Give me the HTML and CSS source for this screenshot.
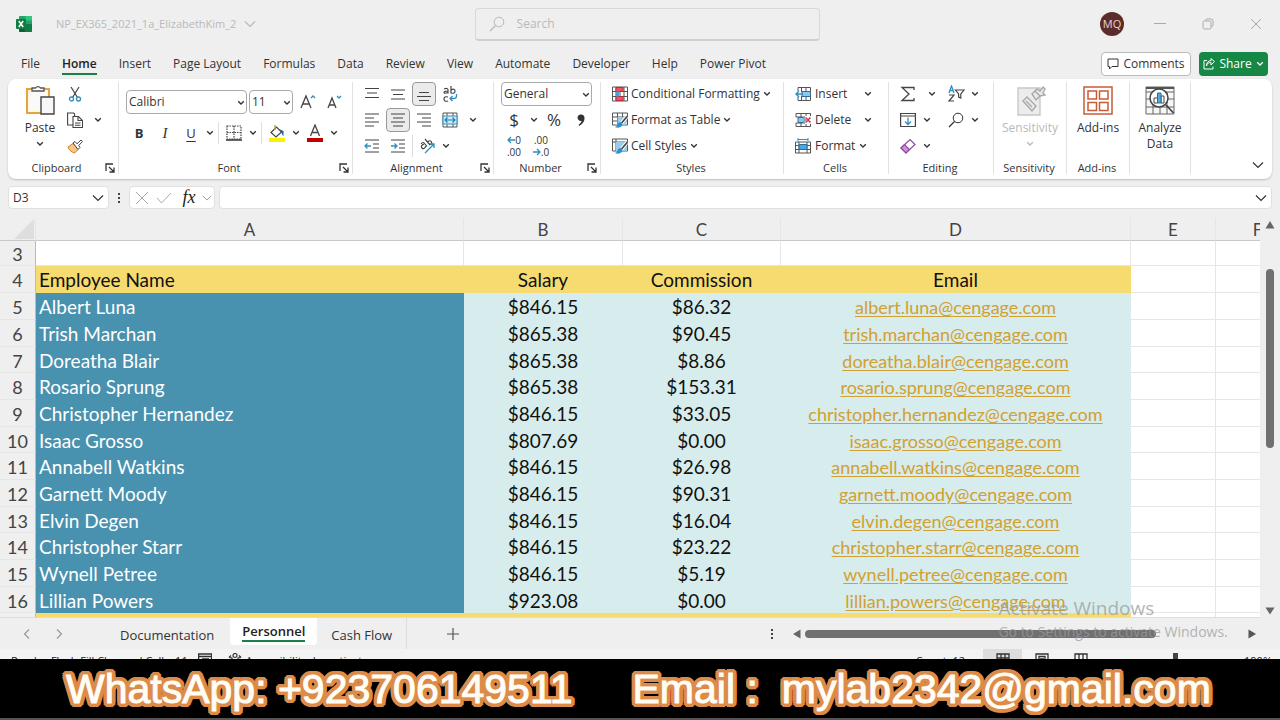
FILE: index.html
```html
<!DOCTYPE html>
<html lang="en">
<head>
<meta charset="utf-8">
<title>NP_EX365_2021_1a_ElizabethKim_2 - Excel</title>
<link rel="stylesheet" href="styles.css">
</head>
<body>
<svg class="defs" aria-hidden="true">
  <symbol id="chev" viewBox="0 0 8 6"><path d="M1.2 1.2 4 4l2.800-2.800" fill="none" stroke="currentColor" stroke-width="1.300"/></symbol>
  <symbol id="chev-lg" viewBox="0 0 12 8"><path d="M1 1.500 6 6.500l5-5" fill="none" stroke="currentColor" stroke-width="1.200"/></symbol>
  <symbol id="launch" viewBox="0 0 10 10"><path d="M1 8V1h7M4 4l4.500 4.500M9 4.500V9H4.500" fill="none" stroke="#333" stroke-width="1.300"/></symbol>
  <symbol id="lens" viewBox="0 0 16 16"><circle cx="10" cy="6" r="4.800" fill="none" stroke="currentColor"/><path d="M6.500 9.500 1 15" stroke="currentColor" stroke-width="1.200"/></symbol>
</svg>

<header class="titlebar">
  <svg class="logo" viewBox="0 0 18 18"><rect x="4" y="1" width="13" height="16" rx="1" fill="#21a366"/><path d="M10.500 1H16a1 1 0 0 1 1 1v3.500h-6.500z" fill="#33c481"/><path d="M4 9h6.500v8H5a1 1 0 0 1-1-1z" fill="#185c37"/><path d="M10.500 9H17v7a1 1 0 0 1-1 1h-5.500z" fill="#107c41"/><rect x="1" y="4" width="10" height="10" rx="1" fill="#107c41"/><path d="m3.800 6 4.400 6M8.200 6l-4.400 6" stroke="#fff" stroke-width="1.500"/></svg>
  <button class="filename">NP_EX365_2021_1a_ElizabethKim_2 <svg class="chev-lg"><use href="#chev-lg"/></svg></button>
  <label class="search"><svg class="i16"><use href="#lens"/></svg><input type="search" placeholder="Search" aria-label="Search"></label>
  <div class="window-controls">
    <button class="avatar">MQ</button>
    <button aria-label="Minimize"><svg class="i12" viewBox="0 0 12 12"><path d="M0 5.500h12" stroke="#aaa"/></svg></button>
    <button aria-label="Restore"><svg class="i12" viewBox="0 0 12 12"><g fill="none" stroke="#aaa"><rect x="1" y="3" width="8" height="8" rx="1.500"/><path d="M3.500 3V2.500A1.500 1.500 0 0 1 5 1h4a2 2 0 0 1 2 2v4a1.500 1.500 0 0 1-1.500 1.500H9"/></g></svg></button>
    <button aria-label="Close"><svg class="i12" viewBox="0 0 12 12"><path d="m1 1 10 10M11 1 1 11" stroke="#aaa"/></svg></button>
  </div>
</header>

<nav class="tabs">
  <button>File</button><button class="active">Home</button><button>Insert</button><button>Page Layout</button><button>Formulas</button><button>Data</button><button>Review</button><button>View</button><button>Automate</button><button>Developer</button><button>Help</button><button>Power Pivot</button>
  <div class="tab-actions">
    <button class="comments"><svg class="i12" viewBox="0 0 12 12"><path d="M1 1h10v7.500H5L2.500 11V8.500H1z" fill="none" stroke="#333"/></svg>Comments</button>
    <button class="share"><svg class="i12" viewBox="0 0 12 12"><path d="M4 2.500H1V11h9V8.500M3.500 8C4 5 6 4.500 8 4.500V7l3.500-3.500L8 .6v2C5 2.600 3.500 5 3.500 8z" fill="none" stroke="#fff"/></svg>Share <svg class="chev"><use href="#chev"/></svg></button>
  </div>
</nav>

<section class="ribbon" aria-label="Home ribbon">
  <div class="group clipboard">
    <div class="body across">
      <button class="big"><svg class="i32" viewBox="0 0 32 32"><path d="M3 5h22v24H3z" fill="#fff6df" stroke="#e3a53f" stroke-width="2"/><path d="M6 8h16v18H6z" fill="#fafafa"/><path d="M8 7V4h3.500a3 3 0 0 1 5 0H20v3z" fill="#fff" stroke="#555" stroke-width="1.300"/><path d="M17 13h13v17H17z" fill="#f7f7f7" stroke="#444" stroke-width="1.400"/></svg>Paste<svg class="chev"><use href="#chev"/></svg></button>
      <div class="rows clip-rows">
        <div class="row"><button aria-label="Cut"><svg class="i16" viewBox="0 0 16 16"><path d="m4 1 6.500 10.500M12 1 5.500 11.500" stroke="#444" stroke-width="1.200"/><g fill="none" stroke="#2f8fbd" stroke-width="1.300"><circle cx="4.500" cy="13" r="2"/><circle cx="11.500" cy="13" r="2"/></g></svg></button></div>
        <div class="row"><button aria-label="Copy"><svg class="i16" viewBox="0 0 16 16"><g fill="#fff" stroke="#444" stroke-width="1.100"><path d="M.6 1h6l1 1v11h-7z"/><path d="M6 4.500h5.500l4 4V15.500H6z"/><path d="M11 4.500v4h4M8 11h5.500M8 13.200h5.500" fill="none"/></g></svg></button><button class="w20" aria-label="Copy options"><svg class="chev"><use href="#chev"/></svg></button></div>
        <div class="row"><button aria-label="Format Painter"><svg class="i16" viewBox="0 0 16 16"><path d="m1 9 5-3.500 5 6L7.500 15C5 14.500 2 12 1 9z" fill="#f7c985" stroke="#d87d20"/><path d="m6 5 2-1.500 2 2.300L14 2l1.500 1.500-3.800 4L13 9.500 11 11.500z" fill="#fff" stroke="#444"/></svg></button></div>
      </div>
    </div>
    <footer><span>Clipboard</span><svg class="launch"><use href="#launch"/></svg></footer>
  </div>

  <div class="group font">
    <div class="body font-body">
      <div class="row"><span class="pick wide"><select aria-label="Font"><option>Calibri</option></select><svg class="chev"><use href="#chev"/></svg></span><span class="pick narrow"><select aria-label="Font size"><option>11</option></select><svg class="chev"><use href="#chev"/></svg></span>
        <button aria-label="Increase font size"><svg class="i16" viewBox="0 0 16 16"><path d="m1 14 5-12 5 12M3 10h6" fill="none" stroke="#444" stroke-width="1.300"/><path d="m11 4 2-2 2 2" fill="none" stroke="#2f8fbd" stroke-width="1.300"/></svg></button>
        <button aria-label="Decrease font size"><svg class="i16" viewBox="0 0 16 16"><path d="M2 14 6 4l4 10M3.500 11h5" fill="none" stroke="#444" stroke-width="1.300"/><path d="m11 2 2 2 2-2" fill="none" stroke="#2f8fbd" stroke-width="1.300"/></svg></button></div>
      <div class="row"><button class="glyph b">B</button><button class="glyph i">I</button><button class="glyph u">U</button><button class="c" aria-label="Underline options"><svg class="chev"><use href="#chev"/></svg></button><i class="sep"></i>
        <button aria-label="Borders"><svg class="i16" viewBox="0 0 16 16"><path d="M1 1h14v13H1zM8 1v13M1 7.500h14" fill="none" stroke="#444" stroke-width="1.200" stroke-dasharray="1.500 1"/><path d="M0 15h16" stroke="#333" stroke-width="1.500"/></svg></button><button class="c" aria-label="Border options"><svg class="chev"><use href="#chev"/></svg></button><i class="sep"></i>
        <button aria-label="Fill colour"><svg class="i18" viewBox="0 0 18 18"><path d="m3 8.500 5.500-5.500 5 5-5.500 5z" fill="#fff" stroke="#444" stroke-width="1.200"/><path d="M7 1v5" stroke="#d0952f" stroke-width="1.300"/><path d="m11 5 4.500 2v5c-2-1-1-4-4.500-7z" fill="#275f9c"/><path d="M1 14h16v4H1z" fill="#f7f400"/></svg></button><button class="c" aria-label="Fill options"><svg class="chev"><use href="#chev"/></svg></button>
        <button aria-label="Font colour"><svg class="i18" viewBox="0 0 18 18"><path d="m4.500 12 4.500-11 4.500 11M6.200 8.500h5.600" fill="none" stroke="#444" stroke-width="1.300"/><path d="M1 14h16v4H1z" fill="#c00000"/></svg></button><button class="c" aria-label="Font colour options"><svg class="chev"><use href="#chev"/></svg></button></div>
    </div>
    <footer><span>Font</span><svg class="launch"><use href="#launch"/></svg></footer>
  </div>

  <div class="group align">
    <div class="body rows">
      <div class="row"><button aria-label="Top align"><svg class="i16" viewBox="0 0 16 16"><path d="M1 2.500h14M3 7h10M1 11.500h14" stroke="#444" stroke-width="1.200"/></svg></button><button aria-label="Middle align"><svg class="i16" viewBox="0 0 16 16"><path d="M1 4h14M3 8.500h10M1 13h14" stroke="#444" stroke-width="1.200"/></svg></button><button class="on" aria-label="Bottom align"><svg class="i16" viewBox="0 0 16 16"><path d="M3 6.500h10M1 10.500h14M3 14.500h10" stroke="#444" stroke-width="1.200"/></svg></button><button aria-label="Wrap text"><svg class="i16" viewBox="0 0 16 16"><g fill="none" stroke="#444" stroke-width="1.200"><path d="M2 3q4-1.500 4 1v3.500M6 5Q2 5 2 6.500t4 0M9 0v7.500M9 4q4-2 4 1t-4 2M6 11q-4-1-4 2t4 2"/></g><path d="M14.500 8v2q0 2.500-3 2.500H8M10.500 10 8 12.500l2.500 2.500" fill="none" stroke="#2f8fbd" stroke-width="1.300"/></svg></button></div>
      <div class="row"><button aria-label="Align left"><svg class="i16" viewBox="0 0 16 16"><path d="M1 2h14M1 6h9M1 10h14M1 14h9" stroke="#444" stroke-width="1.200"/></svg></button><button class="on" aria-label="Centre"><svg class="i16" viewBox="0 0 16 16"><path d="M1 2h14M3 6h10M1 10h14M3 14h10" stroke="#444" stroke-width="1.200"/></svg></button><button aria-label="Align right"><svg class="i16" viewBox="0 0 16 16"><path d="M1 2h14M6 6h9M1 10h14M6 14h9" stroke="#444" stroke-width="1.200"/></svg></button><button aria-label="Merge and centre"><svg class="i16" viewBox="0 0 16 16"><path d="M1 1h14v14H1zM5 1v3M11 1v3M5 12v3M11 12v3" fill="#fff" stroke="#555"/><path d="M1 4h14v8H1z" fill="#cdeafa" stroke="#2f8fbd"/><path d="M3 8h10M5.500 5.500 3 8l2.500 2.500M10.500 5.500 13 8l-2.500 2.500" fill="none" stroke="#1f7fab" stroke-width="1.200"/></svg></button><button class="c w20" aria-label="Merge options"><svg class="chev"><use href="#chev"/></svg></button></div>
      <div class="row"><button aria-label="Decrease indent"><svg class="i16" viewBox="0 0 16 16"><path d="M1 2h14M9 6h6M9 10h6M1 14h14" stroke="#444" stroke-width="1.200"/><path d="M7 8H1M3.500 5.500 1 8l2.500 2.500" fill="none" stroke="#2f8fbd" stroke-width="1.300"/></svg></button><button aria-label="Increase indent"><svg class="i16" viewBox="0 0 16 16"><path d="M1 2h14M9 6h6M9 10h6M1 14h14" stroke="#444" stroke-width="1.200"/><path d="M1 8h6M4.500 5.500 7 8l-2.500 2.500" fill="none" stroke="#2f8fbd" stroke-width="1.300"/></svg></button><i class="sep"></i><button class="angle" aria-label="Orientation"><svg class="i16" viewBox="0 0 16 16"><g fill="none" stroke="#444" stroke-width="1.200"><path d="M2 6q2-3 4 0l2 2.500M5 6Q1 8 3 10t4-2M6 1l5 6M8.500 4q3-2.500 4 0t-2 2.500"/></g><path d="M6 15 15 6M11 6h4v4" fill="none" stroke="#2f8fbd" stroke-width="1.300"/></svg></button><button class="c" aria-label="Orientation options"><svg class="chev"><use href="#chev"/></svg></button></div>
    </div>
    <footer><span>Alignment</span><svg class="launch"><use href="#launch"/></svg></footer>
  </div>

  <div class="group number">
    <div class="body rows">
      <div class="row"><span class="pick format"><select aria-label="Number format"><option>General</option></select><svg class="chev"><use href="#chev"/></svg></span></div>
      <div class="row"><button class="glyph money">$</button><button class="c" aria-label="Currency options"><svg class="chev"><use href="#chev"/></svg></button><button class="glyph money">%</button><button aria-label="Comma style"><svg class="i16" viewBox="0 0 16 16"><path d="M8 2.500a3.200 3.200 0 1 0 .8 6.200Q8 11 5.500 13l.8 1Q12 10.500 11.500 5.500 11 2.500 8 2.500z" fill="#333"/></svg></button></div>
      <div class="row dec"><button class="places"><span><svg class="arr" viewBox="0 0 8 8"><path d="M8 4H1M4 1 1 4l3 3" fill="none" stroke="#2f8fbd" stroke-width="1.300"/></svg>0</span><span>.00</span></button><button class="places"><span>.00</span><span><svg class="arr" viewBox="0 0 8 8"><path d="M0 4h7M4 1l3 3-3 3" fill="none" stroke="#2f8fbd" stroke-width="1.300"/></svg>.0</span></button></div>
    </div>
    <footer><span>Number</span><svg class="launch"><use href="#launch"/></svg></footer>
  </div>

  <div class="group styles">
    <div class="body rows">
      <button class="item"><svg class="i16" viewBox="0 0 16 16"><path d="M.5 1h15v14H.5zM4 1v14M8 1v14M12 1v14M.5 5.500h15M.5 10.500h15" fill="#fff" stroke="#555"/><path d="M4 1.500h7v4H4zM4 10.500h7v4H4z" fill="#ef5364" stroke="#b92b3f"/><path d="M4 5.500h3v5H4z" fill="#4c9fd0"/></svg>Conditional Formatting <svg class="chev"><use href="#chev"/></svg></button>
      <button class="item"><svg class="i16" viewBox="0 0 16 16"><path d="M.5 1h15v12H.5zM5.500 1v12M10.500 1v12M.5 5h15M.5 9h15" fill="#fff" stroke="#555"/><path d="M5.500 5h9v8h-9z" fill="#9bcdea"/><path d="m15.500 4-6 7" stroke="#fff" stroke-width="3.500"/><path d="m15.500 4-6 7" stroke="#444" stroke-width="1.600"/><path d="M9.500 10q-4 0-4 3-1 2-3 2 6 2 8-2z" fill="#2f8fce"/></svg>Format as Table <svg class="chev"><use href="#chev"/></svg></button>
      <button class="item"><svg class="i16" viewBox="0 0 16 16"><path d="M.5 1h15v12H.5zM4 1v12M.5 4h15" fill="#fff" stroke="#555"/><path d="M4 4h11v9H4z" fill="#9bcdea"/><path d="m15.500 4-6 7" stroke="#fff" stroke-width="3.500"/><path d="m15.500 4-6 7" stroke="#444" stroke-width="1.600"/><path d="M9.500 10q-4 0-4 3-1 2-3 2 6 2 8-2z" fill="#2f8fce"/></svg>Cell Styles <svg class="chev"><use href="#chev"/></svg></button>
    </div>
    <footer><span>Styles</span></footer>
  </div>

  <div class="group cells">
    <div class="body rows">
      <div class="row"><button class="item"><svg class="i16" viewBox="0 0 16 16"><path d="M3 1.500h12.500v13H3V11M3 5V1.500M6.500 1.500v4M11 1.500v13M6.500 10.500v4M6 5.500h9.500M6 10.500h9.500" fill="none" stroke="#555"/><path d="M7 5.500h8.500v5H7z" fill="#8cc8ec" stroke="#2f6f96"/><path d="M8 8H1M4 5 1 8l3 3" fill="none" stroke="#2f8fbd" stroke-width="1.400"/></svg>Insert</button><button class="c w20" aria-label="Insert options"><svg class="chev"><use href="#chev"/></svg></button></div>
      <div class="row"><button class="item"><svg class="i16" viewBox="0 0 16 16"><path d="M1 5V1.500h14.500V4M1 11v3.500h14.500V12M6 1.500v13M11 1.500V4M11 12v2.500M1 5h9M1 11h9" fill="none" stroke="#555"/><path d="M3 5.500h5l2.500 2.500L8 10.500H3z" fill="#8cc8ec" stroke="#2f6f96"/><path d="m10.500 5.500 5 5M15.500 5.500l-5 5" stroke="#d0304a" stroke-width="1.500"/></svg>Delete</button><button class="c w20" aria-label="Delete options"><svg class="chev"><use href="#chev"/></svg></button></div>
      <div class="row"><button class="item"><svg class="i16" viewBox="0 0 16 16"><path d="M.5 4h15v11H.5zM4 4v11M12 4v11M.5 7.500h15M.5 11.500h15" fill="#fff" stroke="#555"/><path d="M4 6.500h8v5H4z" fill="#4ca6df" stroke="#2f6f96"/><path d="M3 1.500h10M3 0v3M13 0v3" stroke="#2f8fbd"/></svg>Format <svg class="chev"><use href="#chev"/></svg></button></div>
    </div>
    <footer><span>Cells</span></footer>
  </div>

  <div class="group editing">
    <div class="body rows">
      <div class="row"><button aria-label="AutoSum"><svg class="i16" viewBox="0 0 16 16"><path d="M14 4V1.500H2L9 8l-7 6.500h12V12" fill="none" stroke="#444" stroke-width="1.300"/></svg></button><button class="c w20" aria-label="Sum options"><svg class="chev"><use href="#chev"/></svg></button><button class="last" aria-label="Sort and filter"><svg class="i18" viewBox="0 0 18 18"><path d="m2 8 2.500-7L7 8M3 5.500h3" fill="none" stroke="#2f8fbd" stroke-width="1.300"/><path d="M2 10h5l-5 6h5M8.500 5H17l-3.200 4v4l-2.200-1V9z" fill="none" stroke="#444" stroke-width="1.200"/></svg></button><button class="c" aria-label="Sort options"><svg class="chev"><use href="#chev"/></svg></button></div>
      <div class="row"><button aria-label="Fill"><svg class="i16" viewBox="0 0 16 16"><path d="M.6 1.500h14.800v13H.6zM.6 4h14.800" fill="none" stroke="#444" stroke-width="1.200"/><path d="M8 5.500V12M5 9.500 8 12.500l3-3" fill="none" stroke="#2f8fbd" stroke-width="1.300"/></svg></button><button class="c" aria-label="Fill options"><svg class="chev"><use href="#chev"/></svg></button><button class="last" aria-label="Find and select"><svg class="i16"><use href="#lens"/></svg></button><button class="c" aria-label="Find options"><svg class="chev"><use href="#chev"/></svg></button></div>
      <div class="row"><button aria-label="Clear"><svg class="i16" viewBox="0 0 16 16"><path d="m1 10 9-8.500 5 5L6 15z" fill="#fff" stroke="#8a4aa0" stroke-width="1.200"/><path d="m1 10 3.500-3.500 5 5L6 15z" fill="#d58be0" stroke="#8a4aa0" stroke-width="1.200"/></svg></button><button class="c" aria-label="Clear options"><svg class="chev"><use href="#chev"/></svg></button></div>
    </div>
    <footer><span>Editing</span></footer>
  </div>

  <div class="group sensitivity">
    <div class="body"><button class="big" disabled><svg class="i32" viewBox="0 0 32 32"><path d="M4 4h22v27H4z" fill="#ececec" stroke="#c6c6c6" stroke-width="1.300"/><g fill="#e9e9e9" stroke="#a9a9a9" stroke-width="1.400"><path d="m9 17 4-4 9 9-4 5z"/><path d="m12 17 6 6M18 10l5-5 3 2 3-4 2 2-2 4 2 2-5 1-4 4z"/><path d="m21 7 5 5"/></g></svg>Sensitivity<svg class="chev"><use href="#chev"/></svg></button></div>
    <footer><span>Sensitivity</span></footer>
  </div>
  <div class="group addins">
    <div class="body"><button class="big"><svg class="i32" viewBox="0 0 32 32"><g fill="none" stroke="#c75b38" stroke-width="1.500"><path d="M2 3h28v27H2zM6 7h8.500v8H6zM17.500 7H26v8h-8.500zM6 18.500h8.500v8H6zM17.500 18.500H26v8h-8.500z"/></g></svg>Add-ins</button></div>
    <footer><span>Add-ins</span></footer>
  </div>
  <div class="group analyze">
    <div class="body"><button class="big"><svg class="i32" viewBox="0 0 32 32"><path d="M2 3h28v27H2zM2 8h28M2 15h28M2 23h28M9 15v15M16 22v8M23 8v22" fill="#f7f7f7" stroke="#666"/><path d="M2 3h28v2H2z" fill="#555"/><circle cx="15" cy="14" r="9" fill="#fff" stroke="#444" stroke-width="1.500"/><path d="m22 21 7.500 8" stroke="#444" stroke-width="1.800"/><path d="M10 14h3.500v5H10zM17 12h3v7h-3z" fill="#fff" stroke="#444"/><path d="M13.500 9H17v10h-3.500z" fill="#55a8d8" stroke="#2f6f96"/></svg>Analyze<span>Data</span></button></div>
  </div>
  <button class="collapse" aria-label="Collapse ribbon"><svg class="chev-lg"><use href="#chev-lg"/></svg></button>
</section>

<section class="formula-bar">
  <div class="namebox"><input value="D3" aria-label="Name box"><svg class="chev-lg"><use href="#chev-lg"/></svg></div>
  <svg class="dots" viewBox="0 0 4 12"><path d="M1 1h2v2H1zM1 5h2v2H1zM1 9h2v2H1z" fill="#444"/></svg>
  <div class="fx">
    <button aria-label="Cancel"><svg class="i12" viewBox="0 0 12 12"><path d="m0 0 12 12M12 0 0 12" stroke="#aaa"/></svg></button>
    <button aria-label="Enter"><svg class="i16" viewBox="0 0 16 16"><path d="m1 8 4.500 5L15 3" fill="none" stroke="#aaa"/></svg></button>
    <button class="fn">fx</button><svg class="chev-lg"><use href="#chev-lg"/></svg>
  </div>
  <div class="formula"><input aria-label="Formula"><svg class="chev-lg"><use href="#chev-lg"/></svg></div>
</section>

<main class="sheet">
  <div class="viewport">
    <table>
      <colgroup><col class="cn"><col class="ca"><col class="cb"><col class="cc"><col class="cd"><col class="ce"><col class="cf"></colgroup>
      <thead><tr><th><svg class="corner" viewBox="0 0 20 20"><path d="M20 0v20H0z" fill="#dedede"/></svg></th><th>A</th><th>B</th><th>C</th><th>D</th><th>E</th><th>F</th></tr></thead>
      <tbody>
        <tr class="blank"><th>3</th><td></td><td></td><td></td><td></td><td></td><td></td></tr>
        <tr class="heading"><th>4</th><td>Employee Name</td><td>Salary</td><td>Commission</td><td>Email</td><td></td><td></td></tr>
        <tr><th>5</th><td>Albert Luna</td><td>$846.15</td><td>$86.32</td><td><a href="#">albert.luna@cengage.com</a></td><td></td><td></td></tr>
        <tr><th>6</th><td>Trish Marchan</td><td>$865.38</td><td>$90.45</td><td><a href="#">trish.marchan@cengage.com</a></td><td></td><td></td></tr>
        <tr><th>7</th><td>Doreatha Blair</td><td>$865.38</td><td>$8.86</td><td><a href="#">doreatha.blair@cengage.com</a></td><td></td><td></td></tr>
        <tr><th>8</th><td>Rosario Sprung</td><td>$865.38</td><td>$153.31</td><td><a href="#">rosario.sprung@cengage.com</a></td><td></td><td></td></tr>
        <tr><th>9</th><td>Christopher Hernandez</td><td>$846.15</td><td>$33.05</td><td><a href="#">christopher.hernandez@cengage.com</a></td><td></td><td></td></tr>
        <tr><th>10</th><td>Isaac Grosso</td><td>$807.69</td><td>$0.00</td><td><a href="#">isaac.grosso@cengage.com</a></td><td></td><td></td></tr>
        <tr><th>11</th><td>Annabell Watkins</td><td>$846.15</td><td>$26.98</td><td><a href="#">annabell.watkins@cengage.com</a></td><td></td><td></td></tr>
        <tr><th>12</th><td>Garnett Moody</td><td>$846.15</td><td>$90.31</td><td><a href="#">garnett.moody@cengage.com</a></td><td></td><td></td></tr>
        <tr><th>13</th><td>Elvin Degen</td><td>$846.15</td><td>$16.04</td><td><a href="#">elvin.degen@cengage.com</a></td><td></td><td></td></tr>
        <tr><th>14</th><td>Christopher Starr</td><td>$846.15</td><td>$23.22</td><td><a href="#">christopher.starr@cengage.com</a></td><td></td><td></td></tr>
        <tr><th>15</th><td>Wynell Petree</td><td>$846.15</td><td>$5.19</td><td><a href="#">wynell.petree@cengage.com</a></td><td></td><td></td></tr>
        <tr><th>16</th><td>Lillian Powers</td><td>$923.08</td><td>$0.00</td><td><a href="#">lillian.powers@cengage.com</a></td><td></td><td></td></tr>
        <tr class="total"><th></th><td></td><td></td><td></td><td></td><td></td><td></td></tr>
      </tbody>
    </table>
  </div>
  <div class="vscroll"><svg class="tri" viewBox="0 0 10 8"><path d="M5 0 9.500 7.500h-9z" fill="#666"/></svg><i class="thumb"></i><svg class="tri" viewBox="0 0 10 8"><path d="M5 7.500.5.500h9z" fill="#666"/></svg></div>
</main>

<nav class="sheet-tabs">
  <button class="arrow" aria-label="Previous sheet"><svg class="i12" viewBox="0 0 12 12"><path d="M8 1.500 3.500 6 8 10.500" fill="none" stroke="#999" stroke-width="1.200"/></svg></button>
  <button class="arrow" aria-label="Next sheet"><svg class="i12" viewBox="0 0 12 12"><path d="M4 1.500 8.500 6 4 10.500" fill="none" stroke="#999" stroke-width="1.200"/></svg></button>
  <button class="tab">Documentation</button><button class="tab current"><span>Personnel</span></button><button class="tab cash">Cash Flow</button>
  <button class="arrow plus" aria-label="New sheet"><svg class="i12" viewBox="0 0 12 12"><path d="M0 6h12M6 0v12" stroke="#555" stroke-width="1.200"/></svg></button>
  <div class="hscroll"><svg class="dots" viewBox="0 0 4 12"><path d="M1 1h2v2H1zM1 5h2v2H1zM1 9h2v2H1z" fill="#444"/></svg><svg class="tri left" viewBox="0 0 8 10"><path d="M0 5 7.500.5v9z" fill="#666"/></svg><div class="track"><i class="thumb"></i></div><svg class="tri" viewBox="0 0 8 10"><path d="M8 5 .5.500v9z" fill="#555"/></svg></div>
</nav>

<footer class="status">
  <span class="msg">Ready&nbsp;&nbsp; Flash Fill Changed Cells: 11</span>
  <svg class="i14" viewBox="0 0 14 14"><path d="M.6 1h13v12H.6zM1 3.500h12M4 6h7" fill="none" stroke="#333" stroke-width="1.300"/></svg>
  <svg class="i14 access" viewBox="0 0 14 14"><circle cx="7" cy="2.500" r="2" fill="none" stroke="#333" stroke-width="1.200"/><path d="M1 4.500 4 5v8M13 4.500 10 5v8M1 4.500 3 2.500M13 4.500l-2-2" fill="none" stroke="#333" stroke-width="1.200"/></svg>
  <span>Accessibility: Investigate</span>
  <span class="count">Count: 12</span>
  <div class="views"><span class="chosen"><svg class="i14" viewBox="0 0 14 14"><path d="M1 1h12v12H1zM5 1v12M9 1v12M1 5h12" fill="none" stroke="#333" stroke-width="1.300"/></svg></span><span><svg class="i14" viewBox="0 0 14 14"><path d="M1 1h12v12H1zM4 3.500h6v8H4zM5 6h4" fill="none" stroke="#333" stroke-width="1.300"/></svg></span><span><svg class="i14" viewBox="0 0 14 14"><path d="M1 1h12v12H1zM5 1v6M9 1v6M1 7h12" fill="none" stroke="#333" stroke-width="1.300"/></svg></span></div>
  <i class="zoom-handle"></i><span class="zoom-value">190%</span>
</footer>

<aside class="watermark"><p class="big-line">Activate Windows</p><p>Go to Settings to activate Windows.</p></aside>

<div class="banner"><span>WhatsApp: +923706149511</span><span>Email :</span><span>mylab2342@gmail.com</span></div>
</body>
</html>
```
FILE: styles.css
```css
* { box-sizing: border-box; }
body {
  margin: 0;
  height: 100vh;
  display: flex;
  flex-direction: column;
  overflow: hidden;
  position: relative;
  background: #efefef;
  color: #333;
  font: 12px/16px "Open Sans", "Noto Sans", sans-serif;
}
button, input, select { font: inherit; color: inherit; border: 0; background: none; padding: 0; margin: 0; }
button { display: flex; align-items: center; justify-content: center; white-space: nowrap; }
svg { flex: none; display: block; }
.defs { position: absolute; width: 0; height: 0; }
.chev { width: 8px; height: 6px; }
.chev-lg { width: 12px; height: 8px; }
.i12 { width: 12px; height: 12px; }
.i14 { width: 14px; height: 14px; }
.i16 { width: 16px; height: 16px; }
.i18 { width: 18px; height: 18px; }
.i32 { width: 32px; height: 32px; }

.titlebar { display: flex; align-items: center; height: 48px; padding: 0 18px 0 15px; flex: none; position: relative; }
.logo { width: 18px; height: 18px; }
.filename { margin-left: 23px; gap: 8px; color: #b9b9b9; font-size: 11px; }
.search { position: absolute; left: 37%; width: 27%; display: flex; align-items: center; gap: 12px; height: 33px; margin-left: 1px; padding: 0 13px; border: 1px solid #d8d8d8; border-bottom: 2px solid #cfcfcf; border-radius: 4px; color: #b9b9b9; }
.search input { flex: 1; min-width: 0; outline: 0; }
.search input::placeholder { color: #b9b9b9; }
.window-controls { margin-left: auto; display: flex; align-items: center; gap: 36px; }
.avatar { width: 24px; height: 24px; border-radius: 50%; background: #5b2c2a; color: #e6d5d2; font-size: 11px; margin-right: -6px; }

.tabs { display: flex; align-items: center; gap: 22px; height: 31px; padding: 0 12px 0 21px; flex: none; }
.tabs > button { height: 23px; border-bottom: 2px solid transparent; border-top: 2px solid transparent; }
.tabs > .active { font-weight: 600; color: #222; border-bottom-color: #1a7f49; }
.tab-actions { margin-left: auto; display: flex; gap: 8px; }
.comments, .share { height: 24px; border-radius: 4px; gap: 4px; }
.comments { width: 90px; border: 1px solid #bbb; background: #fff; }
.share { width: 69px; background: #168745; color: #fff; }

.ribbon { display: flex; height: 100px; margin: 0 8px; flex: none; background: #fff; border-radius: 8px; box-shadow: 0 1px 2px #bbb; }
.group { display: flex; flex-direction: column; padding: 2px 0; position: relative; border-right: 1px solid #e2e2e2; border-image: linear-gradient(transparent 4%, #e2e2e2 4%, #e2e2e2 94%, transparent 94%) 1; flex: none; }
.group footer { height: 18px; display: flex; align-items: center; padding-right: 2px; font-size: 11px; }
.group footer span { flex: 1; text-align: center; }
.launch { width: 10px; height: 10px; margin-right: 1px; }
.body { height: 78px; }
.across { display: flex; }
.row { display: flex; align-items: center; height: 26px; }
.row > button { width: 26px; height: 26px; }
.row > .c { width: 12px; }
.row > .w20 { width: 20px; }
.row > .on { height: 24px; width: 24px; margin: 0 1px; border: 1px solid #999; border-radius: 4px; background: #ebebeb; }
.row > .item, .item { width: auto; gap: 4px; height: 26px; justify-content: flex-start; }
.big { flex-direction: column; justify-content: flex-start; width: 100%; padding-top: 3px; }
.big .i32 { margin-bottom: 4px; }
.big .chev { margin-top: 5px; }
.big:disabled { color: #b9b9b9; }
.sep { width: 1px; height: 22px; background: #ddd; margin: 0 2px; }
.clipboard { width: 111px; }
.clipboard .big { width: 36px; margin-left: 14px; }
.clip-rows { margin-left: 4px; }
.font { width: 234px; }
.font-body { padding: 8px 0 0 7px; display: grid; grid-template-rows: 26px 26px; row-gap: 5px; align-content: start; }
.pick { position: relative; height: 24px; border: 1px solid #aaa; border-radius: 4px; margin-right: 2px; }
.pick select { appearance: none; width: 100%; height: 100%; padding: 0 2px; display: block; font-size: 12px; }
.pick .chev { position: absolute; right: 1px; top: 9px; }
.wide { width: 121px; }
.narrow { width: 44px; }
.format { width: 91px; }
.glyph { font-size: 13px; }
.b { font-weight: 700; }
.i { font-family: "Liberation Serif", serif; font-style: italic; font-size: 15px; }
.u { text-decoration: underline; text-underline-offset: 3px; }
.font .sep { margin: 0 2px; }
.align { width: 141px; }
.align .body { padding-left: 6px; }
.align .sep { margin: 0 1px; }
.number { width: 107px; }
.number .body { padding-left: 7px; }
.number .body .row { gap: 1px; }
.money { font-size: 17px; }
.places { flex-direction: column; font-size: 10px; line-height: 12px; align-items: center; }
.places span { display: flex; align-items: center; }
.arr { width: 8px; height: 8px; }
.styles { width: 183px; }
.styles .body { padding-left: 11px; }
.styles .item { gap: 3px; }
.cells { width: 105px; }
.cells .body { padding-left: 11px; }
.cells .row { justify-content: space-between; padding-right: 10px; }
.editing { width: 105px; }
.editing .body { padding-left: 6px; }
.editing .row .w20 { width: 22px; }
.editing .row { padding-right: 12px; }
.editing .last { margin-left: auto; }
.sensitivity { width: 73px; }
.addins { width: 63px; }
.analyze { width: 61px; }
.collapse { margin-left: auto; align-self: flex-end; width: 28px; height: 28px; }

.formula-bar { display: flex; align-items: center; height: 39px; padding: 0 8px 2px; flex: none; }
.namebox, .fx, .formula { display: flex; align-items: center; height: 23px; background: #fff; border: 1px solid #e0e0e0; border-radius: 4px; padding: 0 4px; }
.formula-bar input { flex: 1; min-width: 0; outline: 0; }
.namebox { width: 101px; }
.formula-bar > .dots { margin: 0 8px; }
.dots { width: 4px; height: 12px; }
.fx { width: 86px; gap: 8px; padding: 0 2px 0 6px; margin-right: 4px; color: #999; }
.fn { font: italic 18px "Liberation Serif", serif; color: #222; width: 18px; }
.fx .chev-lg { width: 10px; margin-left: -4px; }
.formula { flex: 1; }

.sheet { flex: 1; min-height: 0; display: flex; }
.viewport { flex: 1; min-width: 0; overflow: hidden; border-bottom: 1px solid #ddd; }
table { table-layout: fixed; width: 1300px; border-collapse: separate; border-spacing: 0; font: 19px/20px Lato, "Open Sans", sans-serif; }
.cn { width: 36px; } .ca { width: 428px; } .cb { width: 159px; } .cc { width: 158px; } .cd { width: 350px; } .ce { width: 85px; } .cf { width: 84px; }
th, td { padding: 2px 0 0; height: 27px; border-right: 1px solid #e6e6e6; border-bottom: 1px solid #e6e6e6; white-space: nowrap; overflow: hidden; text-align: center; }
th { font-weight: 400; font-size: 18px; color: #444; }
thead th { height: 23px; border-bottom-color: #c8c8c8; font-size: 17px; }
thead th:first-child { padding: 0; }
tbody th { border-right-color: #bbb; }
.corner { width: 20px; height: 20px; margin-left: 14px; }
td { background: #fff; }
.blank > *, tr:nth-child(3n+5) > * { height: 26px; }
.blank > * { height: 25px; }
tbody td:nth-child(2) { text-align: left; padding-left: 3px; background: #4891af; color: #fff; border-color: #4891af; }
td:nth-child(3), td:nth-child(4), td:nth-child(5) { background: #d7ecec; border-color: #d7ecec; color: #111; }
.blank td:nth-child(n) { background: #fff; border-color: #e6e6e6; }
.heading td:nth-child(-n+5), .total td:nth-child(-n+5) { background: #f6dc70; border-color: #f6dc70; color: #111; }
td a { color: #d2a02f; font-size: 18px; text-underline-offset: 2px; }
.vscroll { width: 20px; display: flex; flex-direction: column; align-items: center; padding: 3px 0; }
.tri { width: 10px; height: 8px; }
.vscroll .thumb { width: 8px; height: 179px; border-radius: 4px; background: #707070; margin: 40px 0 auto; }

.sheet-tabs { display: flex; height: 31px; padding: 0 24px 0 11px; flex: none; align-items: center; }
.arrow { width: 32px; height: 31px; }
.tab { height: 31px; padding: 2px 14px 0 14px; font-size: 13px; }
.tab:nth-child(3) { margin-left: 31px; padding-right: 16px; }
.current { height: 27px; padding: 0 12px; align-self: flex-start; background: #fff; border-radius: 0 0 4px 4px; font-weight: 600; font-size: 13px; color: #222; }
.current span { border-bottom: 2px solid #1a7f49; line-height: 18px; }
.cash { border-right: 1px solid #ddd; }
.plus { margin-left: 30px; }
.hscroll { margin-left: auto; width: 39%; display: flex; align-items: center; }
.hscroll .tri { width: 8px; height: 10px; }
.hscroll .left { margin-left: 19px; }
.track { flex: 1; padding: 0 4px; }
.track .thumb { display: block; width: 80%; height: 8px; border-radius: 4px; background: #707070; }

.status { height: 10px; overflow: hidden; display: flex; align-items: flex-start; flex: none; background: #f3f3f3; padding: 4px 8px 0 11px; font-size: 11px; color: #222; }
.status .i14 { margin-left: 10px; }
.status .access { margin: 0 4px 0 16px; }
.count { margin-left: auto; }
.views { display: flex; margin: -4px 0 0 18px; }
.views span { width: 39px; height: 18px; padding-top: 4px; }
.views .i14 { margin: 0 auto; }
.views .chosen { background: #ddd; }
.zoom-handle { width: 5px; height: 12px; background: #444; margin-left: 73px; }
.zoom-value { margin-left: 66px; }

.watermark { position: absolute; left: 78%; bottom: 80px; color: rgba(155, 155, 155, .75); white-space: nowrap; pointer-events: none; }
.watermark p { margin: 0; font-size: 14px; }
.watermark .big-line { font-size: 19px; line-height: 32px; }

.banner {
  height: 61px;
  flex: none;
  display: flex;
  align-items: center;
  padding: 0 0 0 66px;
  background: #000;
  border-bottom: 2px solid #555;
  color: #fffdf5;
  font: 41px/48px "Liberation Sans", sans-serif;
  white-space: nowrap;
  -webkit-text-stroke: 1px #fffdf5;
  text-shadow: 4px 0 #dc8b48, -4px 0 #dc8b48, 0 4px #dc8b48, 0 -4px #dc8b48,
    3px 3px #dc8b48, -3px 3px #dc8b48, 3px -3px #dc8b48, -3px -3px #dc8b48,
    4px 2px #dc8b48, -4px 2px #dc8b48, 4px -2px #dc8b48, -4px -2px #dc8b48,
    2px 4px #dc8b48, -2px 4px #dc8b48, 2px -4px #dc8b48, -2px -4px #dc8b48,
    2px 0 #dc8b48, -2px 0 #dc8b48, 0 2px #dc8b48, 0 -2px #dc8b48;
}
.banner span:nth-child(2) { margin-left: 60px; }
.banner span:nth-child(3) { margin-left: 24px; }
```
